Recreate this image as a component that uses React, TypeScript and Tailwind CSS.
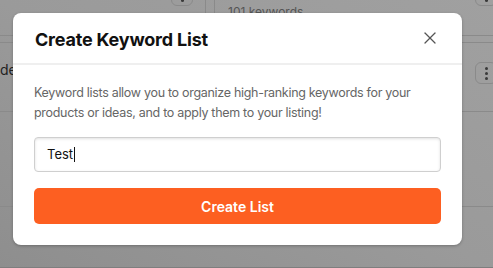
import { X } from "lucide-react";

function Kebab({ className = "" }: { className?: string }) {
  return (
    <div
      className={`flex h-[22px] w-[22px] flex-col items-center justify-center gap-[2px] rounded-[6px] border border-[#8a8a8a] ${className}`}
    >
      <span className="h-[3px] w-[3px] rounded-full bg-[#3a3a3a]" />
      <span className="h-[3px] w-[3px] rounded-full bg-[#3a3a3a]" />
      <span className="h-[3px] w-[3px] rounded-full bg-[#3a3a3a]" />
    </div>
  );
}

export default function App() {
  return (
    <div
      className="relative h-[268px] w-[493px] overflow-hidden bg-gradient-to-tr from-[#8e8e8e] via-[#9a9a9a] to-[#a0a0a0] text-[#2a2a2a]"
      style={{ fontFamily: "Inter, 'Noto Sans', sans-serif" }}
    >
      {/* page underneath the overlay */}
      <div className="flex h-full flex-col">
        <div className="flex h-[36px] border-b border-[#8a8a8a]">
          <div className="flex w-[205px] items-start justify-end pr-[12px]">
            <Kebab className="-mt-[16px]" />
          </div>
          <div className="w-[10px] border-x border-[#8a8a8a]" />
          <div className="flex flex-1 items-start justify-between pl-[13px]">
            <span className="mt-[3px] text-[12px] text-[#555]">101 keywords</span>
            <Kebab className="-mr-[4px] -mt-[16px]" />
          </div>
        </div>
        <div className="h-[7px] border-b border-[#8a8a8a]" />
        <div className="flex h-[69px] items-center justify-between border-b border-[#8a8a8a]">
          <span className="-mt-[16px] text-[14px] text-[#222]">de</span>
          <Kebab className="-mr-[4px] -mt-[8px]" />
        </div>
        <div className="h-[95px] border-b border-[#8a8a8a]" />
        <div className="flex-1 border-b border-[#7e7e7e]" />
      </div>

      {/* modal */}
      <div className="absolute left-[13px] top-[13px] w-[449px] rounded-[8px] bg-white shadow-[0_1px_3px_rgba(0,0,0,0.25)]">
        <div className="flex h-[52px] items-center justify-between border-b-2 border-[#efefef] px-[22px]">
          <h2 className="pt-[3px] text-[18px] font-bold tracking-[-0.2px] text-[#111]">
            Create Keyword List
          </h2>
          <X className="h-[20px] w-[20px] text-[#555]" strokeWidth={1.5} />
        </div>
        <div className="px-[21px] pb-[21px] pt-[18px]">
          <p className="text-[12.5px] leading-[20px] tracking-[-0.3px] text-[#666]">
            Keyword lists allow you to organize high-ranking keywords for your products or ideas, and to apply them to your listing!
          </p>
          <div className="mt-[14px] flex h-[35px] items-center rounded-[4px] border border-[#cfcfcf] bg-white pl-[12px] shadow-[inset_0_1px_3px_rgba(0,0,0,0.12)]">
            <span className="text-[13px] text-[#111]">Test</span>
            <span className="ml-[1px] h-[15px] w-[1px] bg-[#111]" />
          </div>
          <button className="mt-[16px] flex h-[36px] w-full items-center justify-center rounded-[5px] bg-[#fd5f21] text-[14px] font-semibold text-white">
            Create List
          </button>
        </div>
      </div>
    </div>
  );
}
